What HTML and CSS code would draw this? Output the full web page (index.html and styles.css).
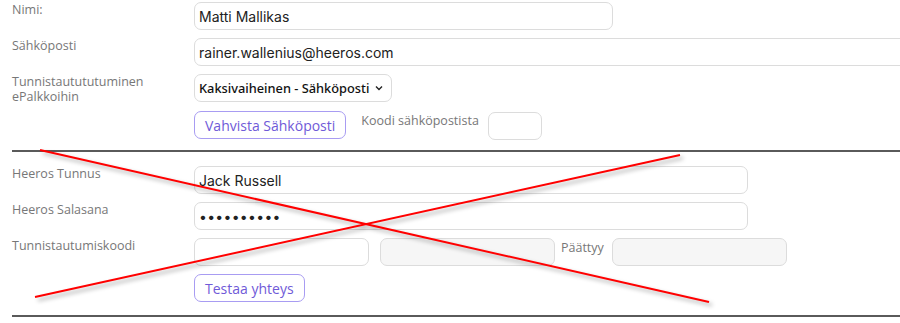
FILE: index.html
```html
<!DOCTYPE html>
<html lang="fi">
  <head>
    <meta charset="UTF-8" />
    <meta name="viewport" content="width=device-width, initial-scale=1.0" />
    <title>Asetukset</title>
    <link rel="stylesheet" href="styles.css">
  </head>
  <body>
    <div class="page">
      <div class="block">
        <div class="row">
          <label class="lbl">Nimi:</label>
          <input class="field w-name" type="text" value="Matti Mallikas" />
        </div>
        <div class="row">
          <label class="lbl">Sähköposti</label>
          <input class="field w-mail" type="text" value="rainer.wallenius@heeros.com" />
        </div>
        <div class="row">
          <label class="lbl two">Tunnistautututuminen<br />ePalkkoihin</label>
          <div class="select">
            <span>Kaksivaiheinen - Sähköposti</span>
            <svg class="chev" width="8" height="6" viewBox="0 0 8 6"><path d="M1 1.5 L4 4.5 L7 1.5" fill="none" stroke="#222" stroke-width="1.4"/></svg>
          </div>
        </div>
        <div class="row row-btn">
          <span class="lbl"></span>
          <div class="inline">
            <button class="btn">Vahvista Sähköposti</button>
            <span class="side">Koodi sähköpostista</span>
            <input class="field w-code" type="text" />
          </div>
        </div>
      </div>

      <div class="rule"></div>

      <div class="block block2">
        <div class="row">
          <label class="lbl">Heeros Tunnus</label>
          <input class="field w-long" type="text" value="Jack Russell" />
        </div>
        <div class="row">
          <label class="lbl">Heeros Salasana</label>
          <input class="field w-long pw" type="password" value="salasana12" />
        </div>
        <div class="row">
          <label class="lbl">Tunnistautumiskoodi</label>
          <div class="inline">
            <input class="field w-short" type="text" />
            <input class="field w-short off" type="text" disabled />
            <span class="side end">Päättyy</span>
            <input class="field w-short off" type="text" disabled />
          </div>
        </div>
        <div class="row">
          <span class="lbl"></span>
          <button class="btn">Testaa yhteys</button>
        </div>
      </div>

      <div class="rule rule2"></div>

      <!-- yliviivaus -->
      <svg class="cross" width="900" height="323" viewBox="0 0 900 323">
        <line x1="40" y1="150" x2="709" y2="302" />
        <line x1="35" y1="297" x2="680" y2="155" />
      </svg>
    </div>
  </body>
</html>
```

FILE: styles.css
```css
body {
  margin: 0;
  background: #fff;
}
.page {
  position: relative;
  box-sizing: border-box;
  width: 900px;
  height: 323px;
  overflow: hidden;
  padding-left: 12px;
  font-family: "Open Sans", "Liberation Sans", sans-serif;
}
.block {
  padding-top: 2px;
}
.block2 {
  padding-top: 14px;
}
.row {
  display: grid;
  grid-template-columns: 182px auto;
  justify-content: start;
  align-items: start;
  height: 28px;
  margin-bottom: 8px;
}
.row-btn {
  height: 29px;
  margin-top: 9px;
  margin-bottom: 0;
}
.block2 .row:last-child {
  margin-bottom: 0;
}
.lbl {
  font-size: 12.5px;
  line-height: 14px;
  color: #777;
  padding-top: 1px;
}
.lbl.two {
  line-height: 15px;
  margin-top: -1px;
}
.field {
  box-sizing: border-box;
  height: 28px;
  border: 1px solid #dcdcdc;
  border-radius: 7px;
  background: #fff;
  padding: 0 4px;
  font-family: "Inter", "Liberation Sans", sans-serif;
  font-size: 14px;
  color: #222;
  outline: none;
}
.w-name { width: 419px; }
.w-mail { width: 720px; }
.w-long { width: 554px; }
.w-short { width: 175px; }
.w-code { width: 54px; margin-top: 1px; }
.off { background: #f6f6f6; }
.pw {
  font-size: 14px;
  letter-spacing: 0.3px;
}
.select {
  box-sizing: border-box;
  width: 198px;
  height: 28px;
  border: 1px solid #dcdcdc;
  border-radius: 7px;
  display: flex;
  align-items: center;
  justify-content: space-between;
  padding: 0 8px 0 4px;
  font-family: "Noto Sans", "Liberation Sans", sans-serif;
  font-size: 12.8px;
  font-weight: 500;
  color: #111;
}
.inline {
  display: flex;
  align-items: flex-start;
}
.btn {
  box-sizing: border-box;
  height: 28px;
  padding: 0 10px;
  border: 1px solid #a89cf2;
  border-radius: 7px;
  background: #fff;
  color: #6f5ad8;
  font-family: "Open Sans", "Liberation Sans", sans-serif;
  font-size: 14px;
}
.side {
  font-size: 12.5px;
  line-height: 15px;
  color: #777;
  padding-top: 2px;
  margin: 0 9px 0 15px;
}
.w-short + .w-short {
  margin-left: 11px;
}
.side.end {
  margin: 0 8px 0 6px;
}
.rule {
  height: 2px;
  background: #5a5a5a;
  margin-top: 10px;
}
.rule2 {
  margin-top: 13px;
}
.cross {
  position: absolute;
  left: 0;
  top: 0;
  pointer-events: none;
  filter: drop-shadow(3px 3px 2px rgba(0, 0, 0, 0.35));
}
.cross line {
  stroke: #ff0000;
  stroke-width: 2;
}
```
